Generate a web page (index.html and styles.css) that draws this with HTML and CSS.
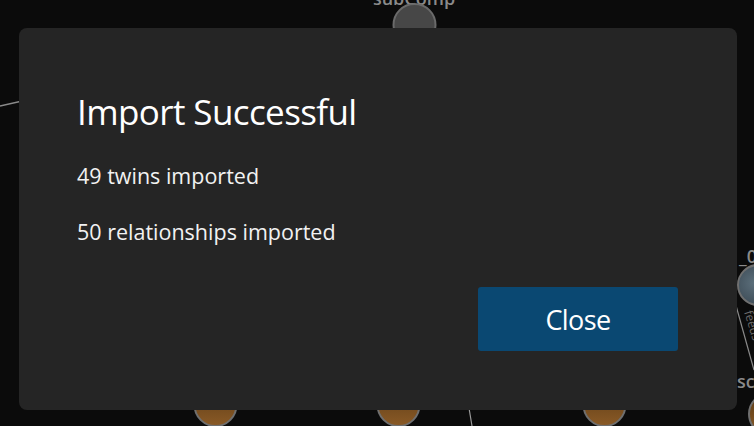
FILE: index.html
```html
<!DOCTYPE html>
<html lang="en">
<head>
<meta charset="utf-8">
<title>Import Successful</title>
<link rel="stylesheet" href="styles.css">
</head>
<body>
<div class="canvas">
  <svg class="graph" width="754" height="426" viewBox="0 0 754 426" xmlns="http://www.w3.org/2000/svg">
    <defs>
      <linearGradient id="orange" x1="0" y1="0" x2="0" y2="1">
        <stop offset="0" stop-color="#5a3a16"/>
        <stop offset="1" stop-color="#8a5a26"/>
      </linearGradient>
      <radialGradient id="blue" cx="0.4" cy="0.45" r="0.6">
        <stop offset="0" stop-color="#5b6e7a"/>
        <stop offset="1" stop-color="#3c4a55"/>
      </radialGradient>
    </defs>
    <line x1="0" y1="106" x2="40" y2="97" stroke="#8a8a8a" stroke-width="1.5"/>
    <line x1="466" y1="390" x2="472" y2="426" stroke="#9a9a9a" stroke-width="1.2"/>
    <line x1="735" y1="302" x2="754" y2="370" stroke="#8a8a8a" stroke-width="1.2"/>
    <text x="744" y="312" transform="rotate(73 744 312)" class="edge-label">feeds</text>
    <text x="414" y="5" class="node-label" text-anchor="middle">subComp</text>
    <circle cx="414.5" cy="25" r="21" fill="#474747" stroke="#6a6a6a" stroke-width="2"/>
    <text x="739" y="263" class="node-label">_0</text>
    <circle cx="758" cy="285" r="20" fill="url(#blue)" stroke="#6f6f6f" stroke-width="2"/>
    <text x="737" y="388" class="node-label">sc</text>
    <circle cx="770" cy="414" r="21" fill="url(#orange)" stroke="#6f6f6f" stroke-width="2"/>
    <circle cx="215.5" cy="405" r="21" fill="url(#orange)" stroke="#6f6f6f" stroke-width="2"/>
    <circle cx="398.5" cy="405" r="21" fill="url(#orange)" stroke="#6f6f6f" stroke-width="2"/>
    <circle cx="604.5" cy="405" r="21" fill="url(#orange)" stroke="#6f6f6f" stroke-width="2"/>
  </svg>

  <div class="overlay">
    <div class="dialog" role="dialog" aria-labelledby="dlg-title">
      <h1 id="dlg-title" class="dialog-title">Import Successful</h1>
      <p class="dialog-line">49 twins imported</p>
      <p class="dialog-line">50 relationships imported</p>
      <div class="dialog-actions">
        <button class="btn-primary" type="button">Close</button>
      </div>
    </div>
  </div>
</div>
</body>
</html>
```

FILE: styles.css
```css
html, body {
  margin: 0;
  padding: 0;
}

body {
  width: 754px;
  height: 426px;
  overflow: hidden;
  background: #0b0b0b;
  font-family: "Open Sans", "Noto Sans", sans-serif;
  color: #ffffff;
}

.canvas {
  position: relative;
  width: 754px;
  height: 426px;
}

.graph {
  position: absolute;
  left: 0;
  top: 0;
  display: block;
}

.node-label {
  font-family: "Open Sans", sans-serif;
  font-size: 18px;
  font-weight: 600;
  fill: #8a8a8a;
}

.edge-label {
  font-family: "Open Sans", sans-serif;
  font-size: 12px;
  fill: #6a6a6a;
}

.overlay {
  position: absolute;
  inset: 0;
  padding: 28px 17px 16px 19px;
  display: flex;
  align-items: flex-start;
}

.dialog {
  width: 718px;
  height: 382px;
  box-sizing: border-box;
  background: #252525;
  border-radius: 8px;
  padding: 60px 59px 0 58px;
  display: flex;
  flex-direction: column;
}

.dialog-title {
  margin: 0;
  font-size: 35px;
  font-weight: 400;
  line-height: 48px;
  letter-spacing: -0.6px;
  color: #ffffff;
}

.dialog-line {
  margin: 0;
  font-size: 21.5px;
  line-height: 28px;
  color: #f2f2f2;
}

.dialog-title + .dialog-line {
  margin-top: 26px;
}

.dialog-line + .dialog-line {
  margin-top: 28px;
}

.dialog-actions {
  display: flex;
  justify-content: flex-end;
  margin-top: 41px;
}

.btn-primary {
  width: 200px;
  height: 64px;
  border: none;
  border-radius: 3px;
  background: #0a4872;
  color: #ffffff;
  font-family: "Open Sans", "Noto Sans", sans-serif;
  font-size: 27px;
  font-weight: 400;
  letter-spacing: -0.6px;
  padding: 0;
  cursor: pointer;
}
```
